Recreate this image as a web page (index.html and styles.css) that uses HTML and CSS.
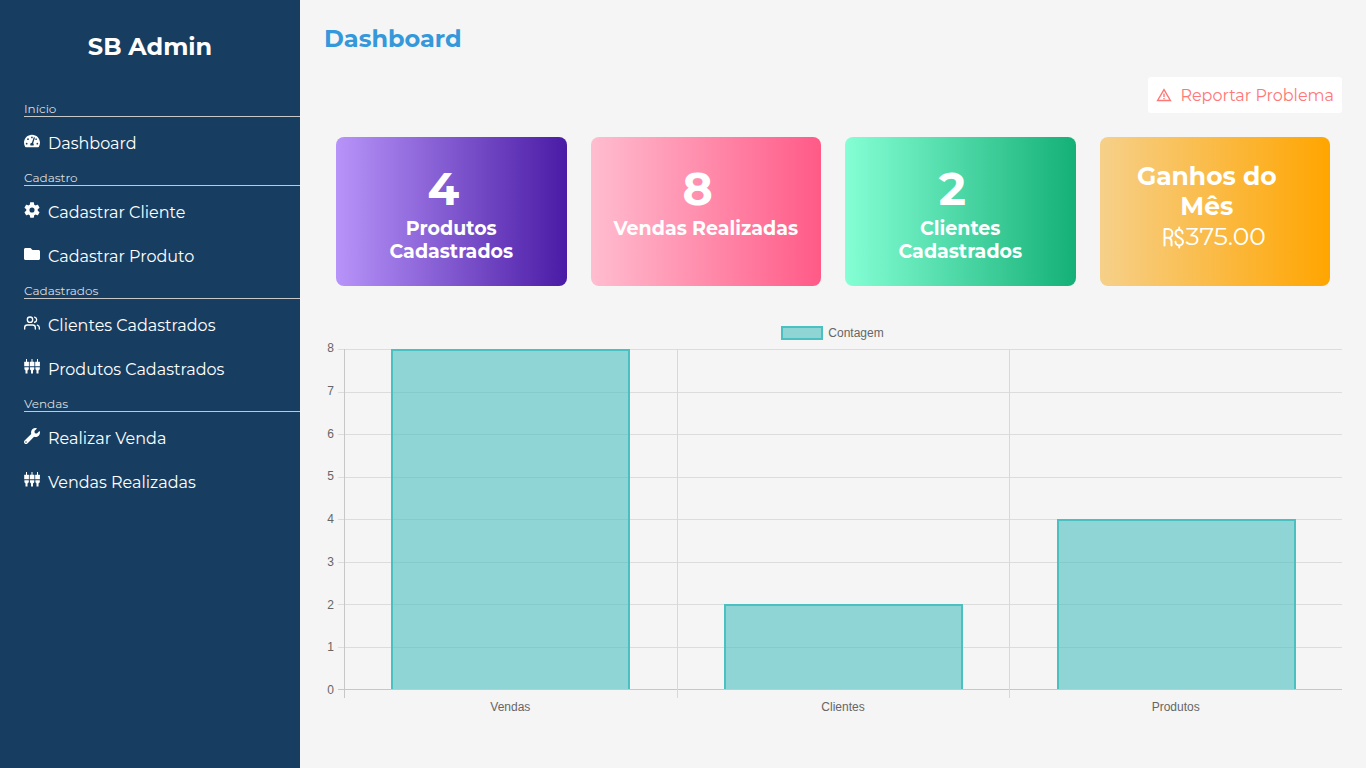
FILE: index.html
```html
<!DOCTYPE html>
<html lang="pt-BR">
<head>
<meta charset="utf-8">
<meta name="viewport" content="width=device-width, initial-scale=1">
<title>SB Admin</title>
<link rel="stylesheet" href="styles.css">
</head>
<body>
<svg class="sprite" aria-hidden="true">
  <symbol id="plugs" viewBox="0 0 16 16">
    <g id="plug"><path d="M2 0h1v2.700h1.500q.4 0 .4.4V7.300H.2V3.100q0-.4.4-.4H2zM.4 8.300h4.400v2L3.500 11.600v3h-2v-3L.4 10.300z"/></g>
    <use href="#plug" x="5.500"/><use href="#plug" x="11"/>
  </symbol>
</svg>
<div class="app">
  <aside class="sidebar">
    <h2 class="brand">SB Admin</h2>
    <nav>
      <h3 class="section">Início</h3>
      <a class="link" href="#"><svg class="icon" viewBox="0 0 576 512"><path d="M288 32C128.940 32 0 160.940 0 320c0 52.800 14.250 102.260 39.060 144.800 5.610 9.620 16.300 15.200 27.440 15.200h443c11.140 0 21.830-5.580 27.440-15.200C561.750 422.260 576 372.800 576 320c0-159.060-128.940-288-288-288zm0 64c14.710 0 26.580 10.130 30.320 23.650-1.110 2.260-2.640 4.230-3.450 6.670l-9.220 27.670c-5.130 3.490-10.970 6.010-17.640 6.010-17.670 0-32-14.330-32-32S270.330 96 288 96zM96 384c-17.670 0-32-14.330-32-32s14.330-32 32-32 32 14.330 32 32-14.330 32-32 32zm48-160c-17.670 0-32-14.330-32-32s14.330-32 32-32 32 14.330 32 32-14.330 32-32 32zm246.770-72.410l-61.330 184C343.130 347.330 352 364.540 352 384c0 11.720-3.380 22.550-8.880 32H232.880c-5.500-9.450-8.880-20.280-8.880-32 0-33.940 26.500-61.430 59.900-63.590l61.340-184.010c4.170-12.560 17.730-19.450 30.360-15.170 12.570 4.190 19.350 17.790 15.170 30.360zm14.660 57.200l15.520-46.550c3.470-1.290 7.130-2.230 11.050-2.230 17.670 0 32 14.330 32 32s-14.330 32-32 32c-11.380-.01-20.890-6.280-26.570-15.220zM480 384c-17.670 0-32-14.330-32-32s14.330-32 32-32 32 14.330 32 32-14.330 32-32 32z"/></svg><span>Dashboard</span></a>
      <h3 class="section">Cadastro</h3>
      <a class="link" href="#"><svg class="icon" viewBox="2 2 20 20"><path d="M19.140 12.940c.04-.3.06-.61.06-.94 0-.32-.02-.64-.07-.94l2.030-1.580c.18-.14.23-.41.12-.61l-1.920-3.320c-.12-.22-.37-.29-.59-.22l-2.390.96c-.5-.38-1.030-.7-1.620-.94l-.36-2.540c-.04-.24-.24-.41-.48-.41h-3.840c-.24 0-.43.17-.47.41l-.36 2.540c-.59.24-1.130.57-1.620.94l-2.390-.96c-.22-.08-.47 0-.59.22L2.740 8.870c-.12.21-.08.47.12.61l2.030 1.580c-.05.3-.09.63-.09.94s.02.64.07.94l-2.030 1.580c-.18.14-.23.41-.12.61l1.920 3.320c.12.22.37.29.59.22l2.390-.96c.5.38 1.030.7 1.620.94l.36 2.540c.05.24.24.41.48.41h3.840c.24 0 .44-.17.47-.41l.36-2.540c.59-.24 1.130-.56 1.620-.94l2.390.96c.22.08.47 0 .59-.22l1.920-3.320c.12-.22.07-.47-.12-.61zM12 15.200a3.200 3.200 0 1 1 0-6.400 3.200 3.200 0 0 1 0 6.400z"/></svg><span>Cadastrar Cliente</span></a>
      <a class="link" href="#"><svg class="icon" viewBox="0 0 512 512"><path d="M464 128H272l-64-64H48C21.490 64 0 85.490 0 112v288c0 26.510 21.490 48 48 48h416c26.510 0 48-21.490 48-48V176c0-26.510-21.490-48-48-48z"/></svg><span>Cadastrar Produto</span></a>
      <h3 class="section">Cadastrados</h3>
      <a class="link" href="#"><svg class="icon line" viewBox="0 0 24 24"><path d="M17 21v-2a4 4 0 0 0-4-4H5a4 4 0 0 0-4 4v2M23 21v-2a4 4 0 0 0-3-3.870M16 3.130a4 4 0 0 1 0 7.750"/><circle cx="9" cy="7" r="4"/></svg><span>Clientes Cadastrados</span></a>
      <a class="link" href="#"><svg class="icon"><use href="#plugs"/></svg><span>Produtos Cadastrados</span></a>
      <h3 class="section">Vendas</h3>
      <a class="link" href="#"><svg class="icon" viewBox="0 0 512 512"><path d="M507.730 109.100c-2.240-9.030-13.540-12.090-20.120-5.510l-74.360 74.360-67.880-11.310-11.310-67.880 74.360-74.360c6.620-6.620 3.430-17.900-5.660-20.160-47.380-11.740-99.550.91-136.580 37.930-39.640 39.640-50.550 97.100-34.050 147.200L18.740 402.760c-24.990 24.990-24.990 65.510 0 90.500 24.990 24.990 65.510 24.990 90.500 0l213.210-213.210c50.120 16.710 107.470 5.680 147.370-34.220 37.070-37.070 49.700-89.320 37.910-136.730zM64 472c-13.250 0-24-10.750-24-24 0-13.260 10.750-24 24-24s24 10.740 24 24c0 13.250-10.750 24-24 24z"/></svg><span>Realizar Venda</span></a>
      <a class="link" href="#"><svg class="icon"><use href="#plugs"/></svg><span>Vendas Realizadas</span></a>
    </nav>
  </aside>
  <main class="main">
    <h2 class="title">Dashboard</h2>
    <button class="report" type="button"><svg class="icon warn" viewBox="0 0 16 16"><path d="M8 2.700 1.600 13.500h12.800z"/><path class="mark" d="M8 6.500v3.500M8 11v1.200"/></svg><span>Reportar Problema</span></button>
    <section class="cards">
      <article class="card purple"><p class="number">4</p><h3 class="label">Produtos Cadastrados</h3></article>
      <article class="card pink"><p class="number">8</p><h3 class="label">Vendas Realizadas</h3></article>
      <article class="card green"><p class="number">2</p><h3 class="label">Clientes Cadastrados</h3></article>
      <article class="card orange"><h2 class="earn">Ganhos do Mês</h2><p class="money"><svg class="real" viewBox="0 0 24 24" role="img" aria-label="Reais"><path d="M2.500 20.500V4H6a4 4 0 0 1 0 8.800H2.500M6 12.800q3.500.4 3.500 4v3.700M20.500 8.200a3.500 3.500 0 0 0-7 0c0 5 7.500 3.700 7.500 8.500a3.700 3.700 0 0 1-7.500 0M17.200 4.500V2.500M17.200 20.500v2"/></svg>375.00</p></article>
    </section>
    <section class="chart">
      <div class="legend"><i class="swatch"></i>Contagem</div>
      <div class="plot">
        <div class="scale"><span>8</span><span>7</span><span>6</span><span>5</span><span>4</span><span>3</span><span>2</span><span>1</span><span>0</span></div>
        <div class="area">
          <div class="lines"><i></i><i></i><i></i><i></i><i></i><i></i><i></i><i></i></div>
          <div class="bars">
            <div class="slot"><div class="bar" style="height:100%"></div></div>
            <div class="slot"><div class="bar" style="height:25%"></div></div>
            <div class="slot"><div class="bar" style="height:50%"></div></div>
          </div>
        </div>
      </div>
      <div class="names"><span>Vendas</span><span>Clientes</span><span>Produtos</span></div>
    </section>
  </main>
</div>
</body>
</html>
```
FILE: styles.css
```css
* { box-sizing: border-box; margin: 0; padding: 0; }
body { font-family: Montserrat, "Open Sans", sans-serif; font-size: 16px; background: #f5f5f5; color: #fff; }
.sprite { position: absolute; width: 0; height: 0; }
.app { display: flex; min-height: 100vh; }
.sidebar { flex: 0 0 300px; background: #173e61; padding: 32px 0 0 24px; }
.brand { font-size: 24px; line-height: 29px; text-align: center; padding-right: 24px; margin-bottom: 40px; }
.section { font-size: 12px; line-height: 15px; font-weight: 400; color: #dcdcdc; border-bottom: 1px solid #c8c8c8; }
.link { display: flex; align-items: flex-start; gap: 8px; padding: 16px 0 6px; line-height: 22px; color: #fff; text-decoration: none; }
.link + .section { margin-top: 9px; }
nav .link { min-height: 44px; }
nav .link:has(+ .section) { min-height: 0; }
.icon { width: 16px; height: 16px; flex: none; fill: currentColor; }
.line { fill: none; stroke: currentColor; stroke-width: 2; stroke-linecap: round; stroke-linejoin: round; }
.main { flex: 1; min-width: 0; display: flex; flex-direction: column; padding: 24px; }
.title { color: #3498db; font-size: 24px; line-height: 29px; margin-bottom: 24px; }
.report { align-self: flex-end; display: flex; align-items: center; gap: 8px; height: 36px; padding: 8px; border: 0; border-radius: 3px; background: #fff; color: #ff7777; font: inherit; }
.warn { fill: none; stroke: currentColor; stroke-width: 1.4; }
.cards { display: grid; grid-template-columns: repeat(4, 1fr); gap: 24px; padding: 24px 12px 36px; }
.card { border-radius: 8px; min-height: 149px; padding: 23px 16px; text-align: center; }
.purple { background: linear-gradient(90deg, #b794f9, #4a1ba5); }
.pink { background: linear-gradient(90deg, #ffbdd0, #ff5a87); }
.green { background: linear-gradient(90deg, #85ffd5, #14b077); }
.orange { background: linear-gradient(90deg, #f6d08a, #ffa500); padding: 24px; }
.number { font-size: 46px; line-height: 57px; font-weight: 700; padding-right: 16px; }
.label { font-size: 19px; line-height: 23px; }
.earn { font-size: 25px; line-height: 30px; padding-right: 16px; }
.money { display: flex; justify-content: center; align-items: center; font-size: 25px; line-height: 31px; padding-right: 2px; }
.real { width: 24px; height: 24px; fill: none; stroke: currentColor; stroke-width: 2; stroke-linecap: round; stroke-linejoin: round; }
.chart { flex: 1; display: flex; flex-direction: column; font: 12px/14px "Helvetica Neue", Helvetica, Arial, sans-serif; color: #666; padding-bottom: 30px; }
.legend { display: flex; justify-content: center; align-items: center; gap: 5px; padding: 4px 1px 9px 0; }
.swatch { width: 42px; height: 14px; border: 2px solid #4bc0c0; background: #8fd5d5; }
.plot { flex: 1; display: flex; gap: 4px; }
.scale { flex: 0 0 10px; display: flex; flex-direction: column; justify-content: space-between; text-align: right; margin: -8px 0 -7px; }
.area { flex: 1; display: grid; }
.lines, .bars { grid-area: 1 / 1; }
.lines { display: flex; flex-direction: column; border-bottom: 1px solid #c7c7c7; }
.lines i { flex: 1; border-top: 1px solid #dcdcdc; }
.bars { display: grid; grid-template-columns: repeat(3, 1fr); margin: 0 0 -8px 6px; }
.slot { display: flex; align-items: flex-end; justify-content: center; border-left: 1px solid #d8d8d8; padding-bottom: 9px; }
.slot:first-child { border-color: #c7c7c7; }
.bar { width: 72%; border: 2px solid #4bc0c0; border-bottom: 0; background: rgba(75, 192, 192, .6); background-clip: padding-box; }
.names { display: grid; grid-template-columns: repeat(3, 1fr); padding: 10px 0 0 20px; text-align: center; }
```
